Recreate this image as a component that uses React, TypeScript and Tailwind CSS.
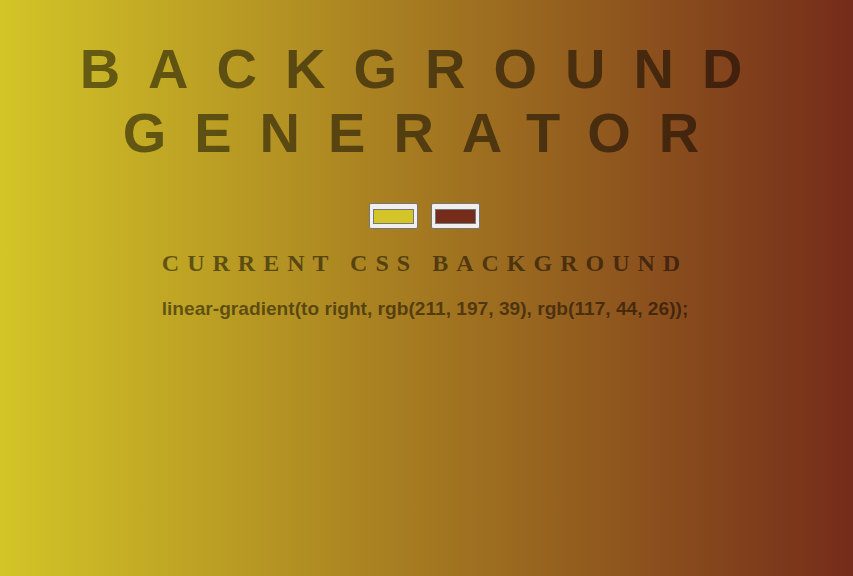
export default function App() {
  return (
    <div className="min-h-[576px] w-full bg-[linear-gradient(to_right,rgb(211,197,39),rgb(117,44,26))] text-center text-black/50 font-['Liberation_Sans',Arial,sans-serif]">
      <div className="flex flex-col items-center pt-[37px] pr-[3px]">
        {/* Title */}
        <h1 className="w-full text-[56px] leading-[64px] font-bold uppercase tracking-[28px]">
          Background Generator
        </h1>

        {/* Colour pickers */}
        <div className="mt-[38px] flex items-center gap-[13px] pr-[2px]">
          <div className="flex h-[26px] w-[49px] items-center justify-center rounded-[2px] border border-[#767676] bg-[#efefef]">
            <div className="h-[15px] w-[41px] border border-[#777] bg-[rgb(211,197,39)]" />
          </div>
          <div className="flex h-[26px] w-[49px] items-center justify-center rounded-[2px] border border-[#767676] bg-[#efefef]">
            <div className="h-[15px] w-[41px] border border-[#777] bg-[rgb(117,44,26)]" />
          </div>
        </div>

        {/* Heading */}
        <h3 className="mt-[16px] font-['Liberation_Serif','Times_New_Roman',serif] text-[24px] font-bold uppercase tracking-[8px]">
          Current CSS Background
        </h3>

        {/* Output */}
        <p className="mt-[14px] text-[19.15px] font-bold">
          linear-gradient(to right, rgb(211, 197, 39), rgb(117, 44, 26));
        </p>
      </div>
    </div>
  );
}
